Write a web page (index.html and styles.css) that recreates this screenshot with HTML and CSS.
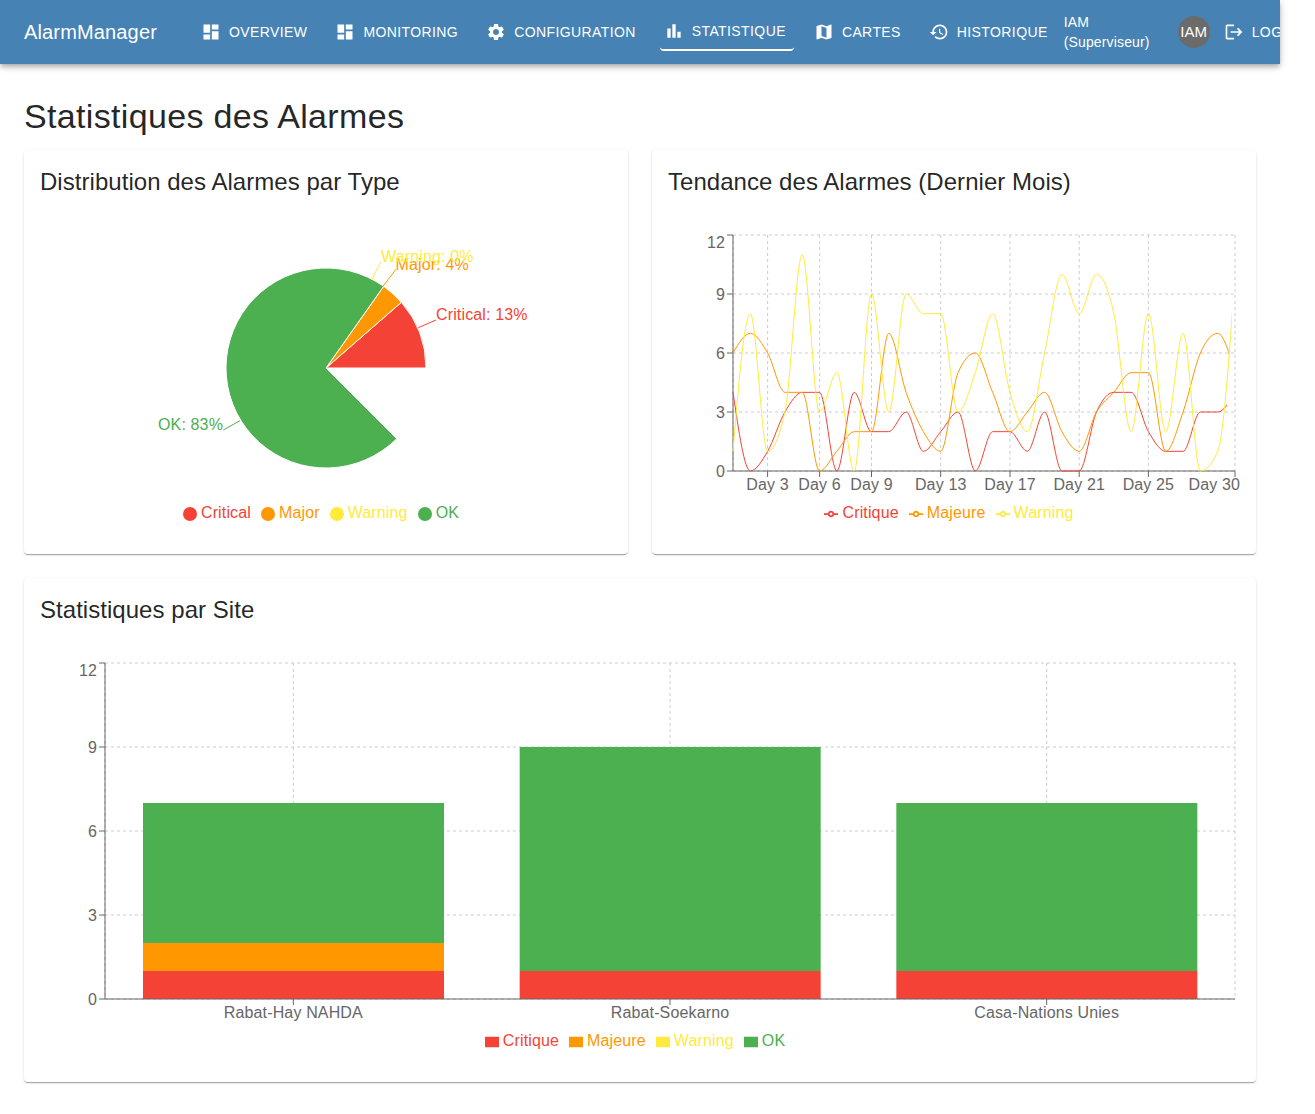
FILE: index.html
```html
<!DOCTYPE html>
<html lang="fr">
<head>
<meta charset="utf-8">
<title>Statistiques des Alarmes</title>
<link rel="stylesheet" href="styles.css">
</head>
<body>
<div class="root">
  <header class="appbar">
    <div class="brand">AlarmManager</div>
    <nav class="nav">
      <a class="btn"><svg class="ico" viewBox="0 0 24 24"><path d="M3 13h8V3H3v10zm0 8h8v-6H3v6zm10 0h8V11h-8v10zm0-18v6h8V3h-8z"/></svg>Overview</a>
      <a class="btn"><svg class="ico" viewBox="0 0 24 24"><path d="M3 13h8V3H3v10zm0 8h8v-6H3v6zm10 0h8V11h-8v10zm0-18v6h8V3h-8z"/></svg>Monitoring</a>
      <a class="btn"><svg class="ico" viewBox="0 0 24 24"><path d="M19.14 12.94c.04-.3.06-.61.06-.94 0-.32-.02-.64-.07-.94l2.03-1.58c.18-.14.23-.41.12-.61l-1.92-3.32c-.12-.22-.37-.29-.59-.22l-2.39.96c-.5-.38-1.03-.7-1.62-.94l-.36-2.54c-.04-.24-.24-.41-.48-.41h-3.84c-.24 0-.43.17-.47.41l-.36 2.54c-.59.24-1.13.57-1.62.94l-2.39-.96c-.22-.08-.47 0-.59.22L2.74 8.87c-.12.21-.08.47.12.61l2.03 1.58c-.05.3-.09.63-.09.94s.02.64.07.94l-2.03 1.58c-.18.14-.23.41-.12.61l1.92 3.32c.12.22.37.29.59.22l2.39-.96c.5.38 1.03.7 1.62.94l.36 2.54c.05.24.24.41.48.41h3.84c.24 0 .44-.17.47-.41l.36-2.54c.59-.24 1.13-.56 1.62-.94l2.39.96c.22.08.47 0 .59-.22l1.92-3.32c.12-.22.07-.47-.12-.61l-2.01-1.58zM12 15.6c-1.98 0-3.6-1.62-3.6-3.6s1.62-3.6 3.6-3.6 3.6 1.62 3.6 3.6-1.62 3.6-3.6 3.6z"/></svg>Configuration</a>
      <a class="btn active"><svg class="ico" viewBox="0 0 24 24"><path d="M4 9h4v11H4zm12 4h4v7h-4zm-6-9h4v16h-4z"/></svg>Statistique</a>
      <a class="btn"><svg class="ico" viewBox="0 0 24 24"><path d="M20.5 3l-.16.03L15 5.1 9 3 3.36 4.9c-.21.07-.36.25-.36.48V20.5c0 .28.22.5.5.5l.16-.03L9 18.9l6 2.1 5.64-1.9c.21-.07.36-.25.36-.48V3.5c0-.28-.22-.5-.5-.5zM15 19l-6-2.11V5l6 2.11V19z"/></svg>Cartes</a>
      <a class="btn"><svg class="ico" viewBox="0 0 24 24"><path d="M13 3c-4.97 0-9 4.03-9 9H1l3.89 3.89.07.14L9 12H6c0-3.87 3.13-7 7-7s7 3.13 7 7-3.13 7-7 7c-1.93 0-3.68-.79-4.94-2.06l-1.42 1.42C8.27 19.99 10.51 21 13 21c4.97 0 9-4.03 9-9s-4.03-9-9-9zm-1 5v5l4.28 2.54.72-1.21-3.5-2.08V8h-1.5z"/></svg>Historique</a>
    </nav>
    <div class="user">IAM (Superviseur)</div>
    <div class="avatar">IAM</div>
    <a class="btn logout"><svg class="ico" viewBox="0 0 24 24"><path d="M17 7l-1.41 1.41L18.17 11H8v2h10.17l-2.58 2.58L17 17l5-5zM4 5h8V3H4c-1.1 0-2 .9-2 2v14c0 1.1.9 2 2 2h8v-2H4V5z"/></svg>Logout</a>
  </header>

  <main class="content">
    <h1 class="page-title">Statistiques des Alarmes</h1>
    <div class="grid">
      <section class="card">
        <h2 class="card-title">Distribution des Alarmes par Type</h2>
        <div class="chart">
          <svg class="plot" width="572" height="271" viewBox="0 0 572 271">
            <g class="slices">
              <path fill="#f44336" d="M286 138L386 138A100 100 0 0 0 361.39 72.3Z"/>
              <path fill="#ff9800" d="M286 138L361.39 72.3A100 100 0 0 0 343.69 56.32Z"/>
              <path fill="#4caf50" d="M286 138L343.69 56.32A100 100 0 1 0 356.71 208.71Z"/>
            </g>
            <g class="leaders">
              <path stroke="#f44336" d="M378.3 97.7L396 90"/>
              <path stroke="#ff9800" d="M342.7 56.7L356 39.3"/>
              <path stroke="#ffeb3b" d="M331.7 50L340.7 31.7"/>
              <path stroke="#4caf50" d="M200 190.7L183.3 200"/>
            </g>
            <text class="c-red" x="396" y="90">Critical: 13%</text>
            <text class="c-orange" x="355.5" y="39.5">Major: 4%</text>
            <text class="c-yellow" x="341" y="31.5">Warning: 0%</text>
            <text class="c-green end" x="183" y="200">OK: 83%</text>
          </svg>
          <ul class="legend">
            <li class="c-red"><svg class="key" viewBox="0 0 32 32"><circle cx="16" cy="16" r="16" fill="#f44336"/></svg>Critical</li>
            <li class="c-orange"><svg class="key" viewBox="0 0 32 32"><circle cx="16" cy="16" r="16" fill="#ff9800"/></svg>Major</li>
            <li class="c-yellow"><svg class="key" viewBox="0 0 32 32"><circle cx="16" cy="16" r="16" fill="#ffeb3b"/></svg>Warning</li>
            <li class="c-green"><svg class="key" viewBox="0 0 32 32"><circle cx="16" cy="16" r="16" fill="#4caf50"/></svg>OK</li>
          </ul>
        </div>
      </section>

      <section class="card">
        <h2 class="card-title">Tendance des Alarmes (Dernier Mois)</h2>
        <div class="chart">
          <svg class="plot" width="572" height="271" viewBox="0 0 572 271">
            <defs>
              <clipPath id="clip-red"><rect x="60" y="0" width="499" height="250"/></clipPath>
              <clipPath id="clip-orange"><rect x="60" y="0" width="501.5" height="250"/></clipPath>
              <clipPath id="clip-yellow"><rect x="60" y="0" width="503.8" height="250"/></clipPath>
            </defs>
            <g class="gridlines">
              <path d="M65 5H567M65 64H567M65 123H567M65 182H567M65 241H567"/>
              <path d="M65 5V241M99.6 5V241M151.6 5V241M203.5 5V241M272.7 5V241M342 5V241M411.2 5V241M480.4 5V241M567 5V241"/>
            </g>
            <path class="axis" d="M65 5V241M59 5H65M59 64H65M59 123H65M59 182H65M59 241H65"/>
            <path class="axis" d="M65 241H567M99.6 241V247M151.6 241V247M203.5 241V247M272.7 241V247M342 241V247M411.2 241V247M480.4 241V247M567 241V247"/>
            <g class="tick end">
              <text x="57" y="17.7">12</text>
              <text x="57" y="69.7">9</text>
              <text x="57" y="128.7">6</text>
              <text x="57" y="187.7">3</text>
              <text x="57" y="246.7">0</text>
            </g>
            <g class="tick mid">
              <text x="99.6" y="260.4">Day 3</text>
              <text x="151.6" y="260.4">Day 6</text>
              <text x="203.5" y="260.4">Day 9</text>
              <text x="272.7" y="260.4">Day 13</text>
              <text x="342" y="260.4">Day 17</text>
              <text x="411.2" y="260.4">Day 21</text>
              <text x="480.4" y="260.4">Day 25</text>
              <text class="end" x="572" y="260.4">Day 30</text>
            </g>
            <path class="trend" stroke="#f44336" clip-path="url(#clip-red)" data-values="4,0,1,3,4,4,0,4,2,2,3,1,2,3,0,2,2,1,3,0,0,3,4,4,2,1,1,3,3,4"/>
            <path class="trend" stroke="#ff9800" clip-path="url(#clip-orange)" data-values="6,7,6,4,4,0,1,2,2,7,4,2,1,5,6,4,2,3,4,2,1,3,4,5,5,1,3,6,7,5"/>
            <path class="trend" stroke="#ffeb3b" clip-path="url(#clip-yellow)" data-values="1,8,1,3,11,3,5,0,9,3,9,8,8,3,5,8,4,2,6,10,8,10,8,2,8,2,7,0,1,10"/>
          </svg>
          <ul class="legend">
            <li class="c-red"><svg class="key" viewBox="0 0 32 32"><path class="line-key" stroke="#f44336" d="M0 16h10.67A5.33 5.33 0 1 1 21.33 16H32M21.33 16A5.33 5.33 0 1 1 10.67 16"/></svg>Critique</li>
            <li class="c-orange"><svg class="key" viewBox="0 0 32 32"><path class="line-key" stroke="#ff9800" d="M0 16h10.67A5.33 5.33 0 1 1 21.33 16H32M21.33 16A5.33 5.33 0 1 1 10.67 16"/></svg>Majeure</li>
            <li class="c-yellow"><svg class="key" viewBox="0 0 32 32"><path class="line-key" stroke="#ffeb3b" d="M0 16h10.67A5.33 5.33 0 1 1 21.33 16H32M21.33 16A5.33 5.33 0 1 1 10.67 16"/></svg>Warning</li>
          </ul>
        </div>
      </section>

      <section class="card wide">
        <h2 class="card-title">Statistiques par Site</h2>
        <div class="chart tall">
          <svg class="plot" width="1200" height="371" viewBox="0 0 1200 371">
            <g class="gridlines">
              <path d="M65 5H1195M65 89H1195M65 173H1195M65 257H1195M65 341H1195"/>
              <path d="M65 5V341M253.33 5V341M630 5V341M1006.67 5V341M1195 5V341"/>
            </g>
            <rect fill="#f44336" x="103" y="313" width="301" height="28"/>
            <rect fill="#ff9800" x="103" y="285" width="301" height="28"/>
            <rect fill="#4caf50" x="103" y="145" width="301" height="140"/>
            <rect fill="#f44336" x="479.67" y="313" width="301" height="28"/>
            <rect fill="#4caf50" x="479.67" y="89" width="301" height="224"/>
            <rect fill="#f44336" x="856.33" y="313" width="301" height="28"/>
            <rect fill="#4caf50" x="856.33" y="145" width="301" height="168"/>
            <path class="axis" d="M65 5V341M59 5H65M59 89H65M59 173H65M59 257H65M59 341H65"/>
            <path class="axis" d="M65 341H1195M253.33 341V347M630 341V347M1006.67 341V347"/>
            <g class="tick end">
              <text x="57" y="17.7">12</text>
              <text x="57" y="94.7">9</text>
              <text x="57" y="178.7">6</text>
              <text x="57" y="262.7">3</text>
              <text x="57" y="346.7">0</text>
            </g>
            <g class="tick mid">
              <text x="253.33" y="360.4">Rabat-Hay NAHDA</text>
              <text x="630" y="360.4">Rabat-Soekarno</text>
              <text x="1006.67" y="360.4">Casa-Nations Unies</text>
            </g>
          </svg>
          <ul class="legend">
            <li class="c-red"><svg class="key" viewBox="0 0 32 32"><path fill="#f44336" d="M0 4h32v24H0z"/></svg>Critique</li>
            <li class="c-orange"><svg class="key" viewBox="0 0 32 32"><path fill="#ff9800" d="M0 4h32v24H0z"/></svg>Majeure</li>
            <li class="c-yellow"><svg class="key" viewBox="0 0 32 32"><path fill="#ffeb3b" d="M0 4h32v24H0z"/></svg>Warning</li>
            <li class="c-green"><svg class="key" viewBox="0 0 32 32"><path fill="#4caf50" d="M0 4h32v24H0z"/></svg>OK</li>
          </ul>
        </div>
      </section>
    </div>
  </main>
</div>
<script src="chart.js"></script>
</body>
</html>
```
FILE: styles.css
```css
* { box-sizing: border-box; }

html, body { margin: 0; background: #fff; }

body {
  font-family: "Liberation Sans", Arial, sans-serif;
  color: rgba(0, 0, 0, 0.87);
}

.root { width: 1280px; }

.appbar {
  display: flex;
  align-items: center;
  height: 64px;
  padding-left: 24px;
  overflow: hidden;
  background: #4682b4;
  color: #fff;
  box-shadow: 0 2px 4px -1px rgba(0, 0, 0, 0.2), 0 4px 5px 0 rgba(0, 0, 0, 0.14), 0 1px 10px 0 rgba(0, 0, 0, 0.12);
  position: relative;
}

.brand {
  flex: none;
  width: 173px;
  font-size: 20px;
  line-height: 1.6;
  letter-spacing: 0.0075em;
  font-weight: 400;
}

.nav { display: flex; flex: none; align-items: center; gap: 16px; }

.btn {
  display: inline-flex;
  flex: none;
  align-items: center;
  padding: 6px 8px;
  border-radius: 4px;
  font-size: 14px;
  font-weight: 400;
  line-height: 1.75;
  letter-spacing: 0.02857em;
  text-transform: uppercase;
  white-space: nowrap;
  color: #fff;
}

.btn.active { border-bottom: 2px solid #fff; }

.ico {
  flex: none;
  width: 20px;
  height: 20px;
  margin-left: -4px;
  margin-right: 8px;
  fill: currentColor;
}

.user {
  flex: none;
  width: 98px;
  margin-left: 8px;
  margin-right: 16px;
  font-size: 14px;
  line-height: 20px;
  letter-spacing: 0.15px;
}

.avatar {
  display: flex;
  flex: none;
  align-items: center;
  justify-content: center;
  width: 32px;
  height: 32px;
  padding-bottom: 1px;
  border-radius: 50%;
  background: #6b6b6b;
  font-size: 15px;
}

.logout { margin-left: 10px; }

.content { padding: 32px 24px 32px; }

.page-title {
  margin: 0 0 12px;
  font-size: 34px;
  font-weight: 400;
  line-height: 1.235;
  letter-spacing: 0.33px;
}

.grid {
  display: grid;
  grid-template-columns: 604px 604px;
  gap: 24px;
}

.card {
  padding: 16px 16px 24px;
  border-radius: 4px;
  background: #fff;
  box-shadow: 0 2px 1px -1px rgba(0, 0, 0, 0.2), 0 1px 1px 0 rgba(0, 0, 0, 0.14), 0 1px 3px 0 rgba(0, 0, 0, 0.12);
}

.card.wide { grid-column: 1 / span 2; }

.card-title {
  margin: 0 0 32px;
  font-size: 24px;
  font-weight: 400;
  line-height: 32px;
  letter-spacing: 0.04px;
}

.chart { height: 300px; }
.chart.tall { height: 400px; }

.plot { display: block; font-size: 16px; letter-spacing: 0.14px; }

.legend {
  display: flex;
  justify-content: center;
  height: 24px;
  margin: 0;
  padding: 0;
  list-style: none;
  font-size: 16px;
  line-height: 24px;
  letter-spacing: 0.14px;
}

.legend li { margin-right: 10px; }

.key {
  display: inline-block;
  width: 14px;
  height: 14px;
  margin-right: 4px;
  vertical-align: middle;
}

.line-key { fill: none; stroke-width: 4; }

.c-red { color: #f44336; fill: #f44336; }
.c-orange { color: #ff9800; fill: #ff9800; }
.c-yellow { color: #ffeb3b; fill: #ffeb3b; }
.c-green { color: #4caf50; fill: #4caf50; }

.slices path { stroke: #fff; stroke-width: 1; }
.leaders path { fill: none; stroke-width: 1; }

.gridlines path { fill: none; stroke: #ccc; stroke-dasharray: 3 3; }
.axis { fill: none; stroke: #666; }
.tick { fill: #666; }
.end { text-anchor: end; }
.mid { text-anchor: middle; }
.tick .end { text-anchor: end; }

.trend { fill: none; stroke-width: 1; }
```
FILE: chart.js
```js
// Draws the trend lines as monotone-x curves from their data-values.
(function () {
  var X0 = 65, STEP = 502 / 29, Y0 = 241, UNIT = 236 / 12;

  function sign(v) { return v < 0 ? -1 : 1; }

  function slope3(a, b, c) {
    var h0 = b.x - a.x, h1 = c.x - b.x;
    var s0 = (b.y - a.y) / h0, s1 = (c.y - b.y) / h1;
    var p = (s0 * h1 + s1 * h0) / (h0 + h1);
    return (sign(s0) + sign(s1)) * Math.min(Math.abs(s0), Math.abs(s1), 0.5 * Math.abs(p)) || 0;
  }

  function curve(points) {
    var n = points.length, tangents = [], i;
    for (i = 1; i < n - 1; i++) {
      tangents[i] = slope3(points[i - 1], points[i], points[i + 1]);
    }
    var edge = function (a, b, t) { return (3 * (b.y - a.y) / (b.x - a.x) - t) / 2; };
    tangents[0] = edge(points[0], points[1], tangents[1]);
    tangents[n - 1] = edge(points[n - 2], points[n - 1], tangents[n - 2]);
    var d = 'M' + points[0].x + ' ' + points[0].y;
    for (i = 0; i < n - 1; i++) {
      var a = points[i], b = points[i + 1], dx = (b.x - a.x) / 3;
      d += 'C' + (a.x + dx) + ' ' + (a.y + dx * tangents[i]) + ' ' +
        (b.x - dx) + ' ' + (b.y - dx * tangents[i + 1]) + ' ' + b.x + ' ' + b.y;
    }
    return d;
  }

  document.querySelectorAll('.trend').forEach(function (path) {
    var points = path.getAttribute('data-values').split(',').map(function (v, i) {
      return { x: X0 + i * STEP, y: Y0 - Number(v) * UNIT };
    });
    path.setAttribute('d', curve(points));
  });
})();
```
